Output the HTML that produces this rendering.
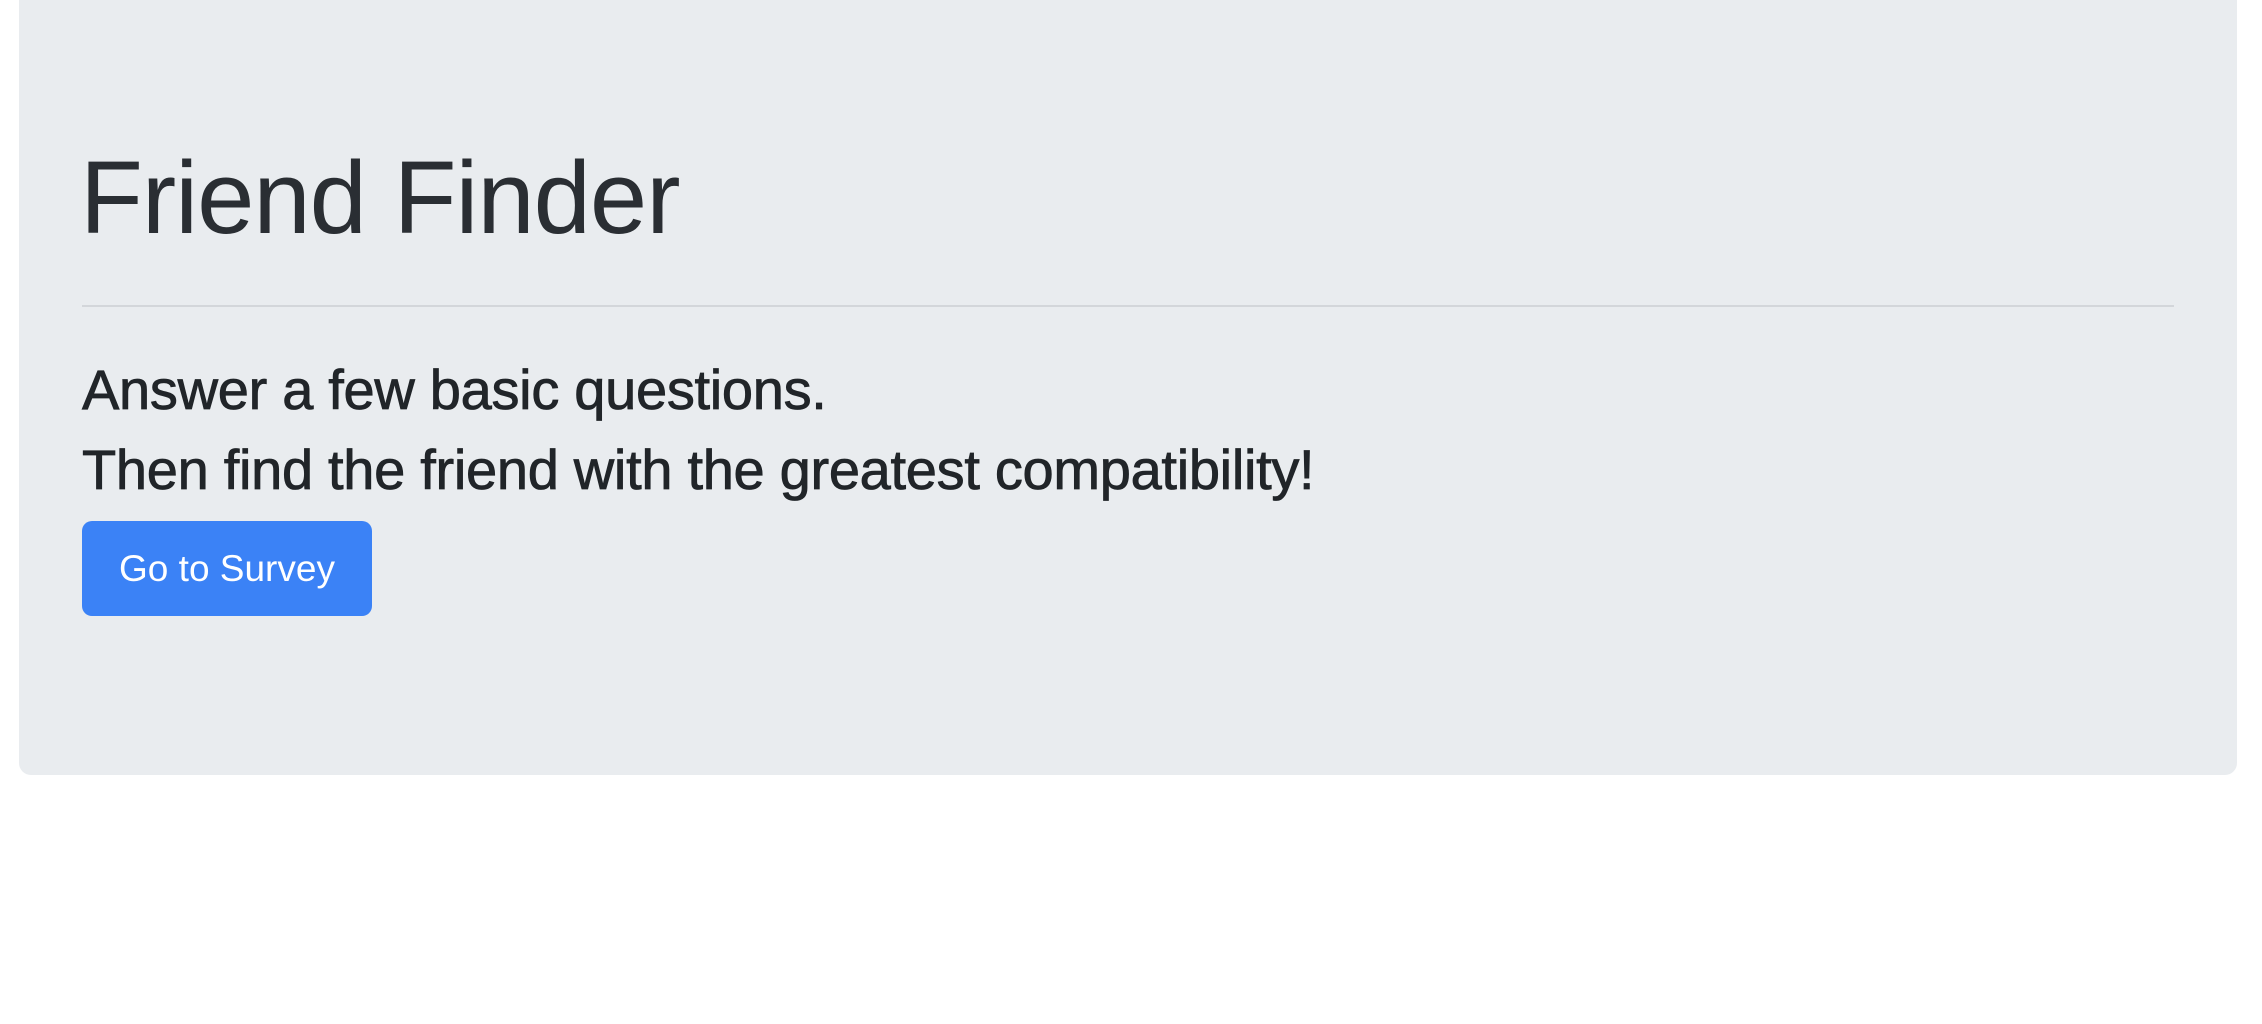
<!DOCTYPE html>
<html><head><meta charset="utf-8">
<style>
html,body{margin:0;padding:0;width:2262px;height:1024px;background:#fff;overflow:hidden;font-family:"Liberation Sans",sans-serif;color:#212529;}
.jumbo{position:absolute;left:19px;top:-20px;width:2218px;height:795px;background:#e9ecef;border-radius:12px;}
.t{position:absolute;left:80px;top:143px;font-size:103px;font-weight:300;line-height:110px;white-space:nowrap;letter-spacing:-1px;color:#2a2e33;}
.hr{position:absolute;left:82px;top:305px;width:2092px;height:2px;background:#d3d6da;}
.l{position:absolute;left:82px;font-size:56px;line-height:60px;white-space:nowrap;font-weight:400;letter-spacing:-0.3px;-webkit-text-stroke:0.8px #212529;}
.btn{position:absolute;left:82px;top:521px;width:290px;height:95px;background:#3b82f6;border-radius:10px;color:#fff;font-size:37px;line-height:95px;text-align:center;}
</style></head><body>
<div class="jumbo"></div>
<div class="t">Friend Finder</div>
<div class="hr"></div>
<div class="l" style="top:360px">Answer a few basic questions.</div>
<div class="l" style="top:440px">Then find the friend with the greatest compatibility!</div>
<div class="btn">Go to Survey</div>
</body></html>
